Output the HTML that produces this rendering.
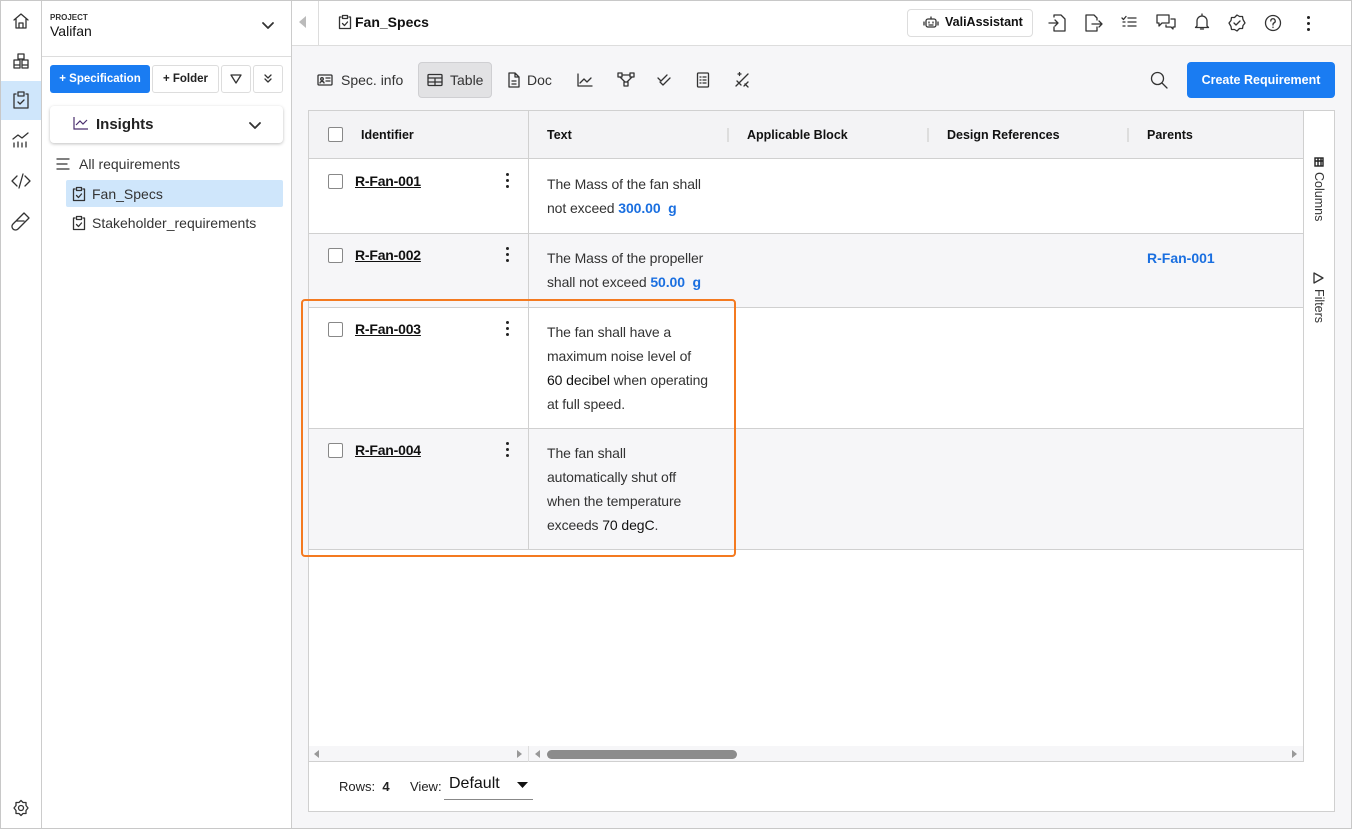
<!DOCTYPE html>
<html><head><meta charset="utf-8"><style>
*{box-sizing:border-box;margin:0;padding:0}
body{width:1352px;height:829px;overflow:hidden;font-family:"Liberation Sans",sans-serif;color:#222;background:#fff;position:relative}
.a{position:absolute}
svg{display:block}
.ic{stroke:#333;fill:none;stroke-width:1.3;stroke-linecap:round;stroke-linejoin:round}
.t{font-size:14px;color:#333;line-height:24px;letter-spacing:-0.1px}
.b{font-weight:bold}
.blue{color:#1a6fe0;font-weight:bold}
.id{font-size:14px;font-weight:bold;text-decoration:underline;color:#111;letter-spacing:-0.2px}
.cb{width:15px;height:15px;border:1.5px solid #888;border-radius:2px;background:#fff}
.dots{width:3px}
.dots i{display:block;width:3px;height:3px;border-radius:50%;background:#222;margin-bottom:3px}
.h{font-size:12.5px;font-weight:bold;color:#111}
</style></head><body>
<div class="a" style="left:0;top:0;width:1352px;height:829px;border:1px solid #c8c8c8"></div>
<!-- rail -->
<div class="a" style="left:41px;top:1px;width:1px;height:827px;background:#ccc"></div>
<div class="a" style="left:1px;top:81px;width:40px;height:39px;background:#cfe6fb"></div>
<svg class="a ic" style="left:11px;top:11px" width="20" height="20" viewBox="0 0 20 20"><path d="M3 9L10 3l7 6M5 8v9h10V8M8 17v-5h4v5"/></svg>
<svg class="a ic" style="left:11px;top:51px" width="20" height="20" viewBox="0 0 20 20"><path d="M7 3h6v5H7zM3 9h6v5H3zM11 9h6v5h-6zM3 14v3h6v-3M11 14v3h6v-3"/></svg>
<svg class="a ic" style="left:12px;top:90px" width="18" height="20" viewBox="0 0 18 20"><path d="M4 4H2v14h14V4h-2M6 2h6v4H6zM6 12l2 2 4-4"/></svg>
<svg class="a ic" style="left:11px;top:131px" width="20" height="18" viewBox="0 0 20 18"><path d="M2 8l5-4 4 3 6-5M3 16v-4M7 16v-5M11 16v-4M15 16v-5"/></svg>
<svg class="a ic" style="left:11px;top:171px" width="20" height="20" viewBox="0 0 20 20"><path d="M6 5L1 10l5 5M14 5l5 5-5 5M12 3L8 17"/></svg>
<svg class="a ic" style="left:11px;top:211px" width="20" height="20" viewBox="0 0 20 20"><path d="M13 2l5 5L7 18a3.5 3.5 0 0 1-5-5zM5 10h8"/></svg>
<svg class="a ic" style="left:12px;top:799px" width="18" height="18" viewBox="0 0 18 18"><circle cx="9" cy="9" r="2.5"/><path d="M9 1.5l2 2 3 0 0 3 2 2.5-2 2.5v3h-3l-2 2-2-2H4v-3L2 9l2-2.5v-3h3z"/></svg>
<!-- sidebar -->
<div class="a" style="left:291px;top:1px;width:1px;height:827px;background:#ccc"></div>
<div class="a" style="left:42px;top:56px;width:249px;height:1px;background:#ddd"></div>
<div class="a" style="left:50px;top:13px;font-size:8px;font-weight:bold;color:#333">PROJECT</div>
<div class="a" style="left:50px;top:23px;font-size:14px;color:#111">Valifan</div>
<svg class="a ic" style="left:261px;top:21px" width="14" height="10" viewBox="0 0 14 10"><path d="M2 2l5 5 5-5" stroke-width="1.8"/></svg>
<div class="a" style="left:50px;top:65px;width:100px;height:28px;background:#1a7cf2;border-radius:3px;color:#fff;font-size:11.5px;font-weight:bold;line-height:28px;text-align:center">+ Specification</div>
<div class="a" style="left:152px;top:65px;width:67px;height:28px;border:1px solid #ddd;border-radius:3px;font-size:11.5px;font-weight:bold;line-height:26px;text-align:center">+ Folder</div>
<div class="a" style="left:221px;top:65px;width:30px;height:28px;border:1px solid #ddd;border-radius:3px"></div>
<svg class="a ic" style="left:229px;top:72px" width="14" height="14" viewBox="0 0 14 14"><path d="M2 3h10L7 11z"/></svg>
<div class="a" style="left:253px;top:65px;width:30px;height:28px;border:1px solid #ddd;border-radius:3px"></div>
<svg class="a ic" style="left:262px;top:73px" width="12" height="12" viewBox="0 0 12 12"><path d="M3 2l3 3 3-3M3 6l3 3 3-3"/></svg>
<div class="a" style="left:50px;top:106px;width:233px;height:37px;background:#fff;border-radius:4px;box-shadow:0 1px 3px rgba(0,0,0,.25)"></div>
<svg class="a" style="left:73px;top:116px" width="16" height="14" viewBox="0 0 16 14" fill="none" stroke="#4a2f6e" stroke-width="1.2"><path d="M1 1v12h14M3 9l4-4 3 3 4-4"/></svg>
<div class="a" style="left:96px;top:116px;font-size:15px;font-weight:bold;color:#222">Insights</div>
<svg class="a ic" style="left:248px;top:121px" width="14" height="10" viewBox="0 0 14 10"><path d="M2 2l5 5 5-5" stroke-width="1.8"/></svg>
<svg class="a ic" style="left:55px;top:157px" width="16" height="14" viewBox="0 0 16 14"><path d="M2 2h12M2 7h10M2 12h12"/></svg>
<div class="a" style="left:79px;top:156px;font-size:14px;color:#333">All requirements</div>
<div class="a" style="left:66px;top:180px;width:217px;height:27px;background:#cfe6fb;border-radius:2px"></div>
<svg class="a ic" style="left:72px;top:186px" width="14" height="16" viewBox="0 0 14 16"><path d="M3 3H1.5v11.5h11V3H11M4.5 1.5h5v3h-5zM4.5 9.5l2 2 3-3.5"/></svg>
<div class="a" style="left:92px;top:186px;font-size:14px;color:#333">Fan_Specs</div>
<svg class="a ic" style="left:72px;top:215px" width="14" height="16" viewBox="0 0 14 16"><path d="M3 3H1.5v11.5h11V3H11M4.5 1.5h5v3h-5zM4.5 9.5l2 2 3-3.5"/></svg>
<div class="a" style="left:92px;top:215px;font-size:14px;color:#333">Stakeholder_requirements</div>
<!-- main -->
<div class="a" style="left:292px;top:45px;width:1059px;height:783px;background:#f6f6f8"></div>
<div class="a" style="left:292px;top:45px;width:1059px;height:1px;background:#ddd"></div>
<div class="a" style="left:318px;top:1px;width:1px;height:44px;background:#ddd"></div>
<svg class="a" style="left:299px;top:16px" width="8" height="12" viewBox="0 0 8 12"><path d="M7 0v12L0 6z" fill="#bbb"/></svg>
<svg class="a ic" style="left:338px;top:14px" width="14" height="16" viewBox="0 0 14 16"><path d="M3 3H1.5v11.5h11V3H11M4.5 1.5h5v3h-5zM4.5 9.5l2 2 3-3.5"/></svg>
<div class="a" style="left:355px;top:14px;font-size:14px;font-weight:bold;color:#111">Fan_Specs</div>
<div class="a" style="left:907px;top:9px;width:126px;height:28px;border:1px solid #ddd;border-radius:4px"></div>
<svg class="a ic" style="left:923px;top:16px" width="16" height="14" viewBox="0 0 16 14"><rect x="3" y="3" width="10" height="8" rx="2"/><path d="M8 1v2M1 6v3M15 6v3M6 6v1M10 6v1M6 9h4"/></svg>
<div class="a" style="left:945px;top:15px;font-size:12.5px;font-weight:bold;color:#111">ValiAssistant</div>
<svg class="a ic" style="left:1048px;top:13px" width="18" height="20" viewBox="0 0 18 20"><path d="M6 4V2h7l4 4v12H6v-4M1 10h9M7 7l3 3-3 3"/></svg>
<svg class="a ic" style="left:1084px;top:13px" width="20" height="20" viewBox="0 0 20 20"><path d="M13 7V5l-3-3H2v16h11v-4M8 11h10M15 8l3 3-3 3"/></svg>
<svg class="a ic" style="left:1121px;top:15px" width="16" height="14" viewBox="0 0 16 14"><path d="M1 3l1.5 1.5L5 1.5M7 3h8M7 7h8M7 11h8M2 7h2M2 11h2"/></svg>
<svg class="a ic" style="left:1156px;top:14px" width="20" height="16" viewBox="0 0 20 16"><path d="M1 1h12v8H6l-3 3V9H1zM15 5h4v8h-2v2l-2-2h-5v-2"/></svg>
<svg class="a ic" style="left:1194px;top:13px" width="16" height="18" viewBox="0 0 16 18"><path d="M3 13V8a5 5 0 0 1 10 0v5l1.5 1.5h-13zM6.5 16h3M8 1v2"/></svg>
<svg class="a ic" style="left:1228px;top:14px" width="18" height="18" viewBox="0 0 18 18"><path d="M9 1l2.5 1.5h3l.5 3L17 9l-2 2.5-.5 3h-3L9 17l-2.5-1.5h-3l-.5-3L1 9l2-2.5.5-3h3z"/><path d="M6 9l2 2 4-4"/></svg>
<svg class="a ic" style="left:1264px;top:14px" width="18" height="18" viewBox="0 0 18 18"><circle cx="9" cy="9" r="7.5"/><path d="M6.8 7a2.2 2.2 0 1 1 3 2c-.8.4-.8 1-.8 2M9 13.2v.3"/></svg>
<div class="a dots" style="left:1307px;top:16px"><i></i><i></i><i></i></div>
<!-- toolbar -->
<svg class="a ic" style="left:317px;top:73px" width="16" height="14" viewBox="0 0 16 14"><rect x="1" y="2" width="14" height="10" rx="1"/><circle cx="5" cy="6" r="1.3"/><path d="M3 10c0-2 4-2 4 0M9 5h4M9 8h4"/></svg>
<div class="a" style="left:341px;top:72px;font-size:14px;color:#333">Spec. info</div>
<div class="a" style="left:418px;top:62px;width:74px;height:36px;background:#e2e2e4;border:1px solid #cfcfd2;border-radius:4px"></div>
<svg class="a ic" style="left:427px;top:73px" width="16" height="14" viewBox="0 0 16 14"><rect x="1" y="1.5" width="14" height="11" rx="1"/><path d="M1 5h14M1 9h14M8 5v7.5"/></svg>
<div class="a" style="left:450px;top:72px;font-size:14px;color:#333">Table</div>
<svg class="a ic" style="left:507px;top:72px" width="14" height="16" viewBox="0 0 14 16"><path d="M2 1h6l4 4v10H2zM8 1v4h4M5 9h4M5 12h4"/></svg>
<div class="a" style="left:527px;top:72px;font-size:14px;color:#333">Doc</div>
<svg class="a ic" style="left:577px;top:73px" width="16" height="14" viewBox="0 0 16 14"><path d="M1 1v12h14M3 10l4-4 3 3 4-4"/></svg>
<svg class="a ic" style="left:617px;top:72px" width="18" height="16" viewBox="0 0 18 16"><rect x="1" y="1" width="4" height="4"/><rect x="13" y="1" width="4" height="4"/><rect x="7" y="10" width="4" height="4"/><path d="M5 3h8M3 5l5 5M15 5l-5 5"/></svg>
<svg class="a ic" style="left:657px;top:73px" width="14" height="14" viewBox="0 0 14 14"><path d="M1 5l3 3 6-6M3 9l3 3 7-7"/></svg>
<svg class="a ic" style="left:696px;top:72px" width="14" height="16" viewBox="0 0 14 16"><rect x="1.5" y="1" width="11" height="14" rx="1"/><path d="M4 5h1M7 5h3M4 8h1M7 8h3M4 11h1M7 11h3"/></svg>
<svg class="a ic" style="left:734px;top:72px" width="16" height="16" viewBox="0 0 16 16"><path d="M2 14L14 2M4 2h3M5.5.5v3M10 14l4-4M3 9l4 4M11 12l3 3"/></svg>
<svg class="a ic" style="left:1150px;top:71px" width="18" height="18" viewBox="0 0 18 18"><circle cx="7.5" cy="7.5" r="6"/><path d="M12 12l5 5"/></svg>
<div class="a" style="left:1187px;top:62px;width:148px;height:36px;background:#1a7cf2;border-radius:4px;color:#fff;font-size:12.5px;font-weight:bold;line-height:36px;text-align:center">Create Requirement</div>
<!-- table -->
<div class="a" style="left:308px;top:110px;width:1027px;height:702px;background:#fff;border:1px solid #d0d0d0"></div>
<div class="a" style="left:309px;top:111px;width:994px;height:48px;background:#f3f3f5;border-bottom:1px solid #d0d0d0"></div>
<div class="a" style="left:1303px;top:111px;width:1px;height:651px;background:#d0d0d0"></div>
<div class="a" style="left:727px;top:128px;width:2px;height:14px;background:#ddd"></div>
<div class="a" style="left:927px;top:128px;width:2px;height:14px;background:#ddd"></div>
<div class="a" style="left:1127px;top:128px;width:2px;height:14px;background:#ddd"></div>
<div class="a cb" style="left:328px;top:127px"></div>
<div class="a h" style="left:361px;top:128px">Identifier</div>
<div class="a h" style="left:547px;top:128px">Text</div>
<div class="a h" style="left:747px;top:128px">Applicable Block</div>
<div class="a h" style="left:947px;top:128px">Design References</div>
<div class="a h" style="left:1147px;top:128px">Parents</div>
<!-- rows -->
<div class="a" style="left:309px;top:233px;width:994px;height:1px;background:#d0d0d0"></div>
<div class="a" style="left:309px;top:234px;width:994px;height:74px;background:#f6f6f8;border-bottom:1px solid #d0d0d0"></div>
<div class="a" style="left:309px;top:428px;width:994px;height:1px;background:#d0d0d0"></div>
<div class="a" style="left:309px;top:429px;width:994px;height:121px;background:#f6f6f8;border-bottom:1px solid #d0d0d0"></div>
<div class="a" style="left:528px;top:111px;width:1px;height:438px;background:#d0d0d0"></div>

<div class="a cb" style="left:328px;top:174px"></div><div class="a id" style="left:355px;top:173px">R-Fan-001</div><div class="a dots" style="left:506px;top:173px"><i></i><i></i><i></i></div>
<div class="a t" style="left:547px;top:172px">The Mass of the fan shall<br>not exceed <span class="blue">300.00&nbsp; g</span></div>
<div class="a cb" style="left:328px;top:248px"></div><div class="a id" style="left:355px;top:247px">R-Fan-002</div><div class="a dots" style="left:506px;top:247px"><i></i><i></i><i></i></div>
<div class="a t" style="left:547px;top:246px">The Mass of the propeller<br>shall not exceed <span class="blue">50.00&nbsp; g</span></div>
<div class="a blue" style="left:1147px;top:250px;font-size:14px">R-Fan-001</div>
<div class="a cb" style="left:328px;top:322px"></div><div class="a id" style="left:355px;top:321px">R-Fan-003</div><div class="a dots" style="left:506px;top:321px"><i></i><i></i><i></i></div>
<div class="a t" style="left:547px;top:320px">The fan shall have a<br>maximum noise level of<br><span style="color:#111">60 decibel</span> when operating<br>at full speed.</div>
<div class="a cb" style="left:328px;top:443px"></div><div class="a id" style="left:355px;top:442px">R-Fan-004</div><div class="a dots" style="left:506px;top:442px"><i></i><i></i><i></i></div>
<div class="a t" style="left:547px;top:441px">The fan shall<br>automatically shut off<br>when the temperature<br>exceeds <span style="color:#111">70 degC</span>.</div>
<!-- side panel -->
<svg class="a" style="left:1314px;top:157px" width="10" height="10" viewBox="0 0 10 10" fill="none" stroke="#222" stroke-width="1.4"><rect x="1" y="1" width="8" height="8"/><path d="M1 4h8M4 1v8M7 1v8"/></svg>
<div class="a" style="left:1312px;top:172px;font-size:12.5px;color:#333;writing-mode:vertical-rl">Columns</div>
<svg class="a ic" style="left:1313px;top:272px" width="12" height="12" viewBox="0 0 12 12"><path d="M1 1v10l9-5z"/></svg>
<div class="a" style="left:1312px;top:289px;font-size:12.5px;color:#333;writing-mode:vertical-rl">Filters</div>
<!-- scrollbar -->
<div class="a" style="left:309px;top:746px;width:994px;height:16px;background:#f6f6f8;border-bottom:1px solid #d0d0d0"></div>
<div class="a" style="left:528px;top:746px;width:1px;height:16px;background:#ddd"></div>
<svg class="a" style="left:314px;top:750px" width="5" height="8"><path d="M5 0v8L0 4z" fill="#999"/></svg>
<svg class="a" style="left:517px;top:750px" width="5" height="8"><path d="M0 0v8l5-4z" fill="#999"/></svg>
<svg class="a" style="left:535px;top:750px" width="5" height="8"><path d="M5 0v8L0 4z" fill="#999"/></svg>
<svg class="a" style="left:1292px;top:750px" width="5" height="8"><path d="M0 0v8l5-4z" fill="#999"/></svg>
<div class="a" style="left:547px;top:750px;width:190px;height:9px;background:#8c8c8c;border-radius:5px"></div>
<!-- footer -->
<div class="a" style="left:339px;top:779px;font-size:13px;color:#222">Rows:&nbsp; <b>4</b></div>
<div class="a" style="left:410px;top:779px;font-size:13px;color:#222">View:</div>
<div class="a" style="left:449px;top:775px;font-size:16px;color:#111">Default</div>
<svg class="a" style="left:517px;top:782px" width="11" height="6"><path d="M0 0h11L5.5 6z" fill="#111"/></svg>
<div class="a" style="left:444px;top:799px;width:89px;height:1px;background:#888"></div>
<!-- highlight -->
<div class="a" style="left:301px;top:299px;width:435px;height:258px;border:2.5px solid #f47a20;border-radius:4px"></div>
</body></html>
